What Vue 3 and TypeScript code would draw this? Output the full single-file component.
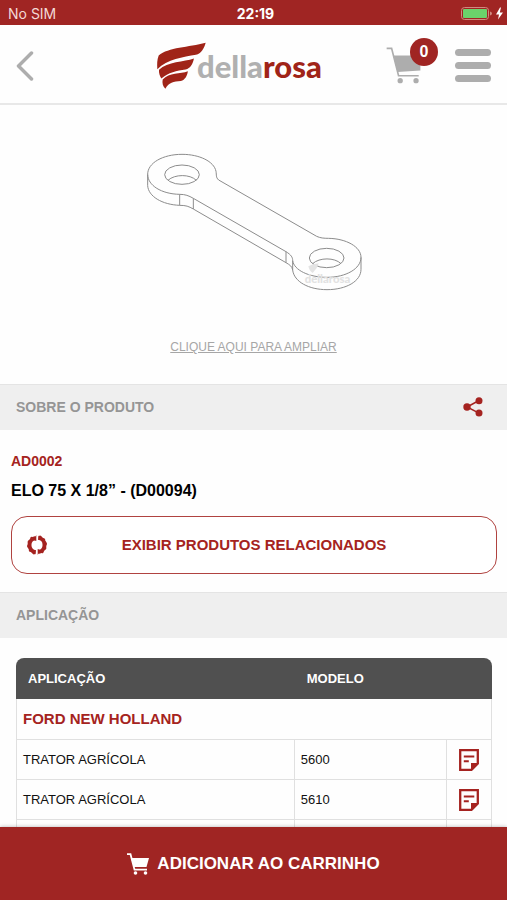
<script setup lang="ts">
import { ref } from 'vue'

interface Application {
  type: string
  model: string
}

const cartCount = ref<number>(0)

const applications: Application[] = [
  { type: 'TRATOR AGRÍCOLA', model: '5600' },
  { type: 'TRATOR AGRÍCOLA', model: '5610' },
]

function addToCart(): void {
  cartCount.value += 1
}

// Rotation of every tooth around the ring icon
const teeth: number[] = [22, 52, 82, 112, 142, 202, 232, 262, 292, 322]
</script>

<template>
  <div class="app">
    <div class="status">
      <span class="carrier">No SIM</span>
      <span class="clock">22:19</span>
      <span class="power">
        <svg width="42" height="16" viewBox="0 0 42 16" aria-hidden="true">
          <rect x="0.5" y="1.5" width="27" height="12" rx="3" fill="none" stroke="#d08a80" />
          <rect x="2" y="3" width="24" height="9" rx="1" fill="#6bd36b" />
          <path d="M29 5.5v4q2-.5 2-2t-2-2z" fill="#d08a80" />
          <path d="M39 1.500 35 8.500h3L37 13.500 42 6.500h-3.200L40 1.500z" fill="#fff" />
        </svg>
      </span>
    </div>

    <header class="header">
      <div class="side-left">
        <button class="icon-button" type="button" aria-label="Voltar">
          <svg width="18" height="30" viewBox="0 0 18 30">
            <path d="M15.500 2 2.500 15l13 13" fill="none" stroke="#adadad" stroke-width="3.500" stroke-linecap="round" stroke-linejoin="round" />
          </svg>
        </button>
      </div>
      <a class="logo" href="#">
        <svg width="49" height="47" viewBox="466 130 146 140" aria-hidden="true">
          <g fill="#a02418">
            <path d="M611 132C606 150 598 164 582 168C545 174 496 182 467 211C466 196 466 182 471 170C500 145 560 146 611 132Z" />
            <path d="M576 179C573 195 566 208 551 212C525 216 500 220 479 239C474 232 471 222 472 213C498 187 546 190 576 179Z" />
            <path d="M558 217C556 230 550 243 537 246C516 247 500 251 491 269C483 262 481 252 483 242C503 219 535 226 558 217Z" />
          </g>
        </svg>
        <span class="wordmark"><span class="della">della</span><span class="rosa">rosa</span></span>
      </a>
      <div class="side-right">
        <button class="icon-button cart" type="button" aria-label="Carrinho">
          <svg width="35" height="37" viewBox="400 142 104 112">
            <path d="M401 146h15l21 83h61" fill="none" stroke="#adadad" stroke-width="5" />
            <path d="M421 168h82v45l-69 5z" fill="#adadad" />
            <circle cx="442" cy="244" r="8" fill="#adadad" />
            <circle cx="490" cy="244" r="8" fill="#adadad" />
          </svg>
          <span class="badge">{{ cartCount }}</span>
        </button>
        <button class="icon-button menu" type="button" aria-label="Menu">
          <span class="bar"></span>
          <span class="bar"></span>
          <span class="bar"></span>
        </button>
      </div>
    </header>

    <main class="content">
      <section class="photo">
        <svg width="240" height="160" viewBox="-4 0 720 480" role="img" aria-label="Elo">
          <g fill="none" stroke="#8c8c8c" stroke-width="3" stroke-linejoin="round">
            <path d="M250 120C241 112 244 106 242 94C236 64 192 43 140 43C82 43 37 69 37 103C37 136 78 162 133 163C150 163 160 167 174 175L452 335C468 345 472 352 472 362C476 390 520 412 575 412C632 412 677 386 677 352C677 320 632 296 580 295C565 295 555 294 544 289Z" />
            <path d="M37 103V137C39 169 80 194 133 196C152 196 160 199 174 207L452 368C464 375 470 379 472 390C476 425 520 449 575 449C632 449 677 424 677 388V352" />
            <path d="M133 163V196M174 175V207M452 335V368M472 362V390" />
            <ellipse cx="140" cy="104" rx="52" ry="29" />
            <path d="M98 121C118 102 164 102 183 121" />
            <ellipse cx="574" cy="354" rx="52" ry="29" />
            <path d="M532 371C552 352 598 352 617 371" />
          </g>
          <path d="M519 379q14-8 31-9l-6 14-12 15q-10-6-13-20z" fill="#e4e4e4" />
          <text class="watermark" x="508" y="428">dellarosa</text>
        </svg>
        <a class="enlarge" href="#">CLIQUE AQUI PARA AMPLIAR</a>
      </section>

      <div class="section-bar">
        <h2 class="section-title">SOBRE O PRODUTO</h2>
        <button class="icon-button" type="button" aria-label="Compartilhar">
          <svg width="20" height="20" viewBox="0 0 20 20">
            <path d="M16 3.500 4 10l12 6.200" fill="none" stroke="#a52320" stroke-width="1.500" />
            <circle cx="16" cy="3.700" r="3.500" fill="#a52320" />
            <circle cx="4" cy="10" r="3.700" fill="#a52320" />
            <circle cx="16" cy="16" r="3.500" fill="#a52320" />
          </svg>
        </button>
      </div>

      <section class="info">
        <p class="code">AD0002</p>
        <h1 class="name">ELO 75 X 1/8” - (D00094)</h1>
        <button class="related" type="button">
          <svg class="related-icon" width="22" height="22" viewBox="-1 -1 22 22" aria-hidden="true">
            <g fill="none" stroke="#a52320" stroke-width="4">
              <path d="M11.200 2.800A7.200 7.200 0 0 1 11.200 17.100" />
              <path d="M8.800 17.200A7.200 7.200 0 0 1 8.800 2.900" />
            </g>
            <g fill="#a52320">
              <circle v-for="angle in teeth" :key="angle" cx="10" cy="1.500" r="1.500" :transform="`rotate(${angle} 10 10)`" />
              <path d="M9.300 0v6L6.500 5zM10.700 20v-6l2.800 1z" />
            </g>
          </svg>
          <span class="related-label">EXIBIR PRODUTOS RELACIONADOS</span>
        </button>
      </section>

      <div class="section-bar">
        <h2 class="section-title">APLICAÇÃO</h2>
      </div>

      <section class="applications">
        <table class="table">
          <colgroup>
            <col />
            <col class="col-model" />
            <col class="col-note" />
          </colgroup>
          <thead>
            <tr>
              <th scope="col">APLICAÇÃO</th>
              <th scope="col" colspan="2">MODELO</th>
            </tr>
          </thead>
          <tbody>
            <tr>
              <th class="brand" scope="rowgroup" colspan="3">FORD NEW HOLLAND</th>
            </tr>
            <tr v-for="item in applications" :key="item.model">
              <td>{{ item.type }}</td>
              <td>{{ item.model }}</td>
              <td class="note">
                <button class="icon-button" type="button" :aria-label="`Observações ${item.model}`">
                  <svg width="20" height="22" viewBox="0 0 20 22">
                    <path d="M1.200 1.200h17.600v13.300L12.500 20.800H1.200z" fill="none" stroke="#a52320" stroke-width="2.300" />
                    <path d="M12 21.500V14h7.500z" fill="#a52320" />
                    <path d="M4.800 7.500h10.500M4.800 12.300h5" stroke="#a52320" stroke-width="2" />
                  </svg>
                </button>
              </td>
            </tr>
            <tr>
              <td></td>
              <td></td>
              <td></td>
            </tr>
          </tbody>
        </table>
      </section>
    </main>

    <button class="add" type="button" @click="addToCart">
      <svg width="22" height="22" viewBox="0 0 22 22" aria-hidden="true">
        <path d="M0 1.200h3.500l4 15.500h12.500" fill="none" stroke="#fff" stroke-width="1.800" />
        <path d="M4 5h18l-2.500 9H6.800z" fill="#fff" />
        <circle cx="8.500" cy="20" r="1.800" fill="#fff" />
        <circle cx="18.500" cy="20" r="1.800" fill="#fff" />
      </svg>
      <span>ADICIONAR AO CARRINHO</span>
    </button>
  </div>
</template>

<style>
body {
  margin: 0;
  background: #fff;
}
</style>

<style scoped>
.app {
  display: flex;
  flex-direction: column;
  height: 100vh;
  font-family: "Liberation Sans", Arial, sans-serif;
  color: #111;
  background: #fefefe;
}

button {
  font: inherit;
  cursor: pointer;
}

.icon-button {
  display: block;
  padding: 0;
  border: 0;
  background: none;
}

.icon-button svg {
  display: block;
}

.status {
  display: grid;
  grid-template-columns: 1fr auto 1fr;
  align-items: center;
  flex: none;
  height: 25px;
  padding: 2px 4px 0 8px;
  box-sizing: border-box;
  background: #a02523;
  color: #fff;
  font-family: Inter, sans-serif;
  font-size: 14px;
  line-height: 20px;
}

.carrier {
  color: #f3d9d6;
}

.clock {
  font-weight: 700;
}

.power {
  display: flex;
  justify-content: flex-end;
}

.header {
  display: flex;
  align-items: center;
  flex: none;
  height: 80px;
  padding: 3px 16px 0;
  box-sizing: border-box;
  border-bottom: 2px solid #e8e8e8;
}

.side-left {
  flex: 5 1 0;
}

.side-right {
  display: flex;
  align-items: center;
  justify-content: flex-end;
  gap: 34px;
  flex: 6 1 0;
}

.logo {
  display: flex;
  align-items: center;
  text-decoration: none;
}

.logo svg {
  display: block;
}

.wordmark {
  margin-left: -9px;
  font-family: Lato, sans-serif;
  font-size: 31px;
  font-weight: 900;
  line-height: 40px;
}

.della {
  color: #b0b0b0;
}

.rosa {
  color: #a02418;
}

.cart {
  position: relative;
}

.badge {
  position: absolute;
  top: -9px;
  left: 24px;
  width: 28px;
  height: 28px;
  border-radius: 14px;
  background: #a02523;
  color: #fff;
  font-size: 16px;
  font-weight: 700;
  line-height: 28px;
  text-align: center;
}

.menu {
  display: flex;
  flex-direction: column;
  gap: 6px;
  width: 36px;
}

.bar {
  height: 7px;
  border-radius: 4px;
  background: #adadad;
}

.content {
  flex: 1;
  min-height: 0;
  overflow-y: auto;
  scrollbar-width: none;
}

.photo {
  display: flex;
  flex-direction: column;
  align-items: center;
  gap: 39px;
  padding: 35px 0 29px;
}

.watermark {
  fill: #e2e2e2;
  font-family: Lato, sans-serif;
  font-size: 34px;
  font-weight: 900;
}

.enlarge {
  color: #a6a6a6;
  font-size: 12px;
  line-height: 16px;
}

.section-bar {
  display: flex;
  align-items: center;
  justify-content: space-between;
  height: 46px;
  padding: 0 24px 2px 16px;
  box-sizing: border-box;
  border-top: 1px solid #e4e4e4;
  background: #efefef;
}

.section-title {
  margin: 0;
  color: #959595;
  font-size: 14px;
  line-height: 20px;
}

.info {
  padding: 21px 10px 18px 11px;
}

.code {
  margin: 0;
  color: #a52320;
  font-size: 14px;
  font-weight: 700;
  line-height: 20px;
}

.name {
  margin: 10px 0 15px;
  color: #000;
  font-size: 16px;
  line-height: 20px;
}

.related {
  display: grid;
  grid-template-columns: 22px 1fr 22px;
  align-items: center;
  width: 100%;
  height: 58px;
  padding: 0 14px 1px;
  border: 1px solid #b04340;
  border-radius: 16px;
  background: #fff;
  color: #a52320;
  font-size: 15px;
  font-weight: 700;
}

.related-label {
  line-height: 20px;
}

.applications {
  padding: 20px 15px 24px 16px;
}

.table {
  width: 100%;
  table-layout: fixed;
  border-collapse: separate;
  border-spacing: 0;
  font-size: 13px;
  line-height: 20px;
  text-align: left;
}

.col-model {
  width: 32%;
}

.col-note {
  width: 45px;
}

.table thead th {
  height: 41px;
  padding: 0 12px;
  background: #505050;
  color: #fff;
}

.table thead th:first-child {
  border-top-left-radius: 8px;
}

.table thead th:last-child {
  border-top-right-radius: 8px;
}

.table tbody th,
.table tbody td {
  height: 40px;
  padding: 0 6px;
  box-sizing: border-box;
  border-right: 1px solid #e0e0e0;
  border-bottom: 1px solid #e0e0e0;
}

.table tbody th:first-child,
.table tbody td:first-child {
  border-left: 1px solid #e0e0e0;
}

.table tbody .brand {
  height: 41px;
  color: #a52320;
  font-size: 15px;
}

.note .icon-button {
  margin: 0 auto;
}

.add {
  display: flex;
  align-items: center;
  justify-content: center;
  gap: 8px;
  flex: none;
  position: relative;
  height: 73px;
  padding: 0;
  border: 0;
  background: #a02523;
  box-shadow: 0 0 4px rgba(0, 0, 0, 0.3);
  color: #fff;
  font-size: 17px;
  font-weight: 700;
  line-height: 20px;
}
</style>
